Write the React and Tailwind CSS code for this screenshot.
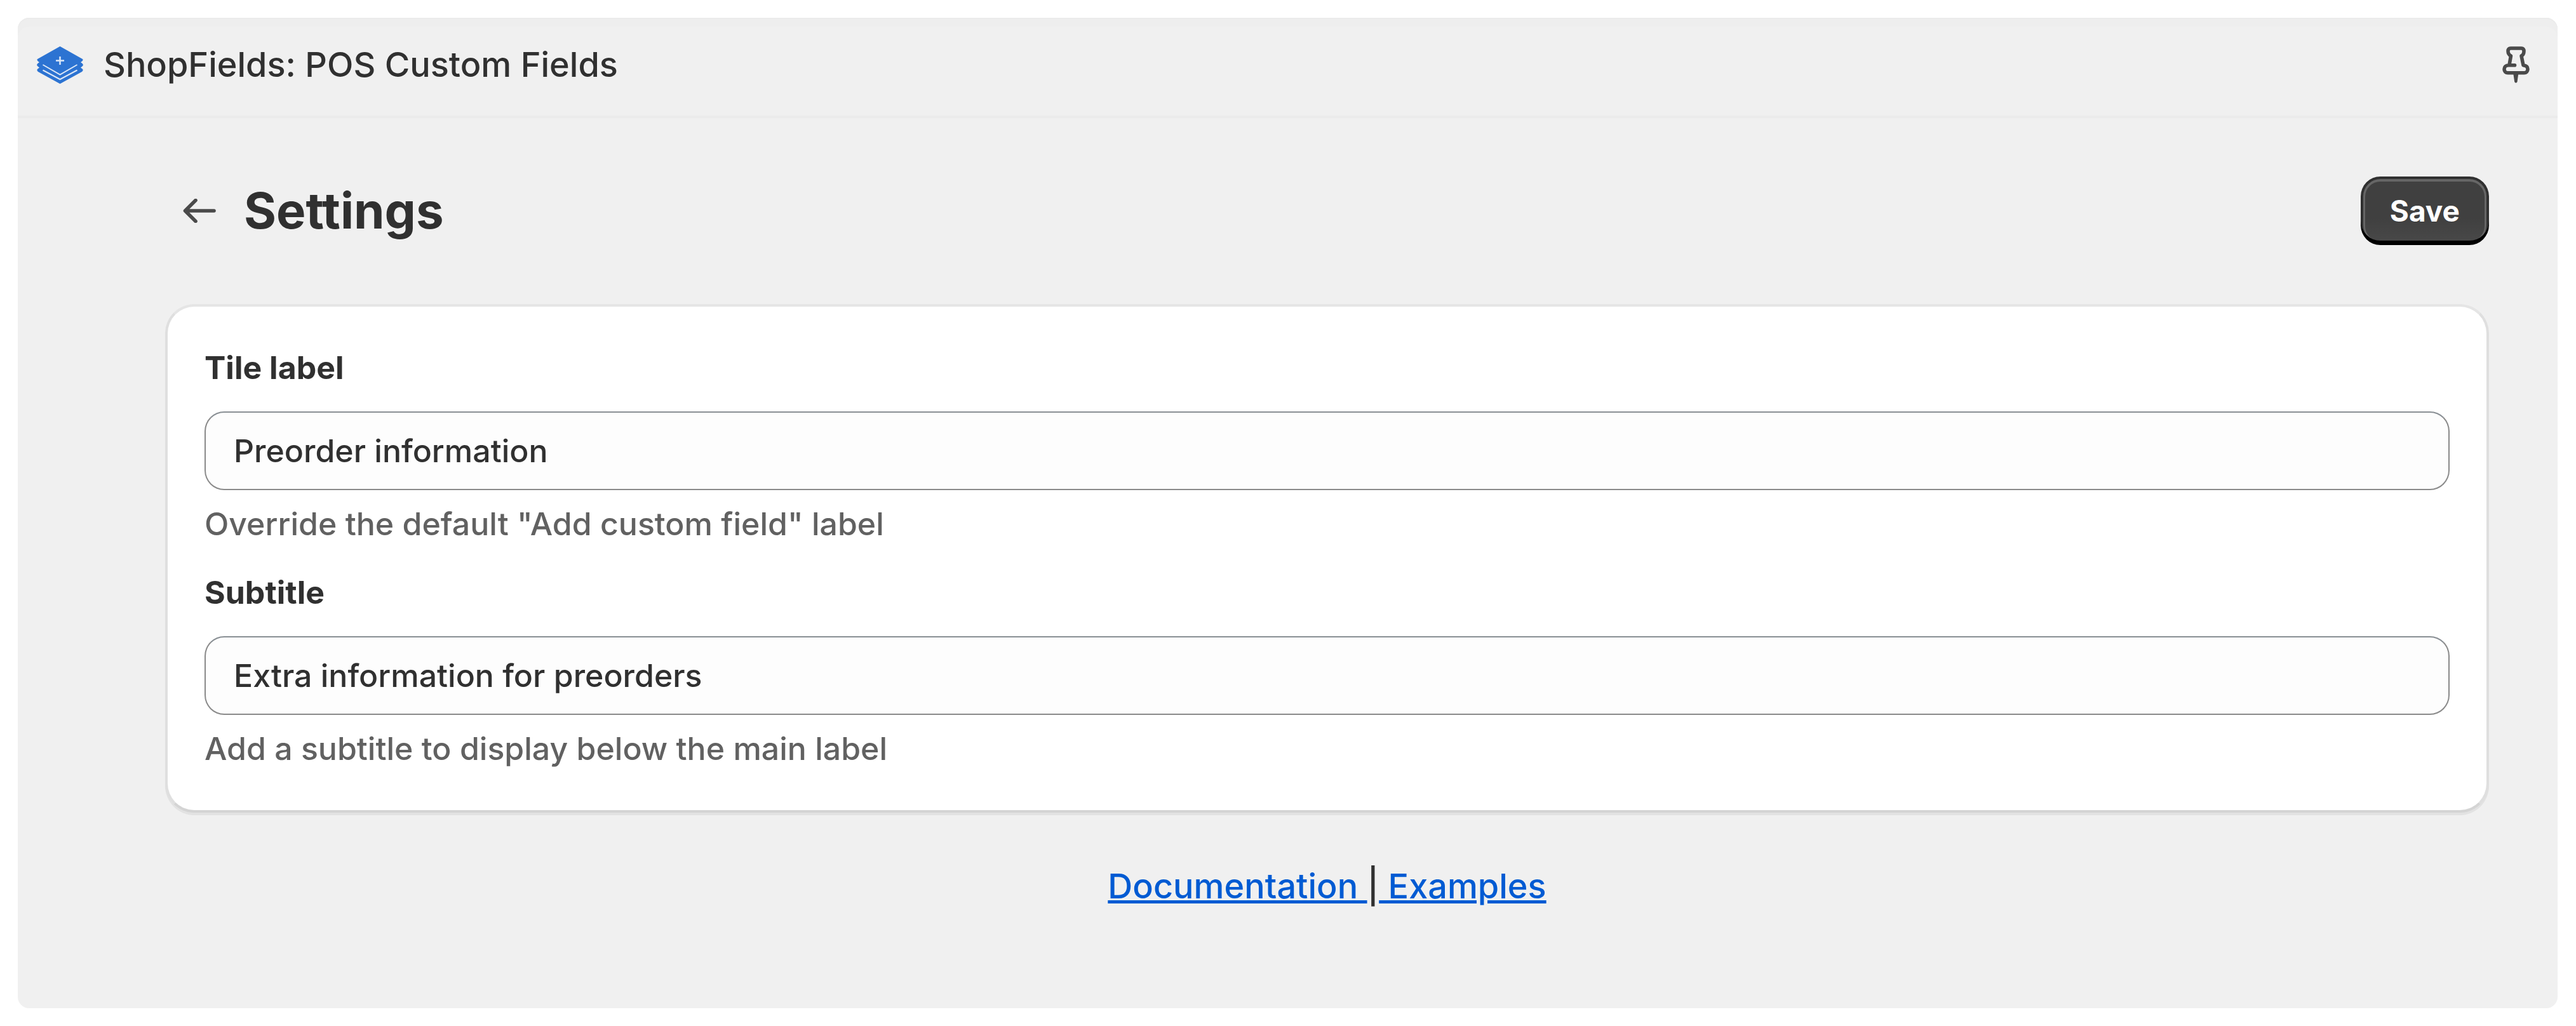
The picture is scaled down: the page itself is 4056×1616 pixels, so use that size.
import { useState } from "react";

const fields = [
  {
    id: "tileLabel",
    label: "Tile label",
    value: "Preorder information",
    help: 'Override the default "Add custom field" label',
  },
  {
    id: "subtitle",
    label: "Subtitle",
    value: "Extra information for preorders",
    help: "Add a subtitle to display below the main label",
  },
];

function AppLogo() {
  return (
    <svg className="h-[59px] w-[73px]" viewBox="0 0 73 59" fill="none" aria-hidden="true">
      <path
        d="M36.5 0L72 20Q74 22 69 25Q74 28 72.5 30.5Q71 32 69 33.5Q75 37 71 40L36.5 59L2 40Q-2 37 4 33.5Q2 32 .5 30.5Q-1 28 4 25Q-1 22 1 20Z"
        fill="#2c73d2"
      />
      <path d="M9.5 29L36.5 44.5L63.5 29M9.5 37.5L36.5 52L63.5 37.5" stroke="#dbe7f7" strokeWidth="2" />
      <path d="M36.5 16V29M30 22.5H43" stroke="#dbe7f7" strokeWidth="2.5" />
    </svg>
  );
}

function PinIcon() {
  return (
    <svg className="h-[58px] w-[43px]" viewBox="0 0 43 58" fill="none" aria-hidden="true">
      <path
        d="M19.5 29.8H10C5.5 29.8 3 32.5 3 36C3 39.5 5.5 41.7 8.5 41.7H34.5C37.5 41.7 40 39.5 40 36C40 32.5 37.5 30.3 33 29.8L30 15C33 13.5 34 11 34 7.5C34 4.7 32.5 3 30 3H13C10.5 3 9 4.7 9 7.5C9 11 10.5 13.5 13.5 15L11 29"
        stroke="#4a4a4a"
        strokeWidth="5.6"
        strokeLinecap="round"
        strokeLinejoin="round"
      />
      <path d="M17.3 43H25.3L23.5 56Q21.3 59 19.2 56Z" fill="#4a4a4a" />
    </svg>
  );
}

function BackIcon() {
  return (
    <svg className="h-[38px] w-[52px]" viewBox="0 0 52 38" fill="none" aria-hidden="true">
      <path
        d="M49 19H4M20 2.5L3.5 19L20 35.5"
        stroke="#4a4a4a"
        strokeWidth="5.6"
        strokeLinecap="round"
        strokeLinejoin="round"
      />
    </svg>
  );
}

export default function App() {
  const [values, setValues] = useState({
    tileLabel: fields[0].value,
    subtitle: fields[1].value,
  });

  return (
    <div className="flex min-h-screen flex-col bg-white p-7 pr-[29px] font-['Inter',sans-serif] font-[450] text-[#303030]">
      <div className="flex grow flex-col rounded-[18px] bg-[#f0f0f0] shadow-[inset_0_2px_0_#ebebeb,inset_0_14px_0_#eeeeee]">

        {/* App bar */}
        <header className="flex items-center justify-between border-b-4 border-[#ebebeb] px-[30px] pt-9 pb-[42px]">
          <div className="flex items-center gap-8">
            <AppLogo />
            <span className="text-[54px] leading-[76px]">ShopFields: POS Custom Fields</span>
          </div>
          <button type="button" aria-label="Pin app" className="mr-[14px]">
            <PinIcon />
          </button>
        </header>

        <main className="pt-[92px] pr-[108px] pl-[232px]">

          {/* Page header */}
          <div className="mb-[93px] flex items-center justify-between pl-7">
            <div className="flex items-center gap-11">
              <button type="button" aria-label="Back">
                <BackIcon />
              </button>
              <h1 className="text-[78px] leading-[108px] font-bold">Settings</h1>
            </div>
            <button
              type="submit"
              form="settings"
              className="h-[108px] rounded-[31px] bg-[#404040] bg-linear-to-b from-transparent from-60% to-white/5 px-[46px] text-[46px] font-[650] text-white shadow-[inset_0_-7px_0_#000,inset_0_0_0_4px_#303030,inset_0_1px_0_7px_#666]"
            >
              Save
            </button>
          </div>

          {/* Settings card */}
          <form
            id="settings"
            onSubmit={(e) => e.preventDefault()}
            className="flex flex-col gap-[31px] rounded-[46px] border-4 border-[#dfdfdf] border-t-[#e5e5e5] border-b-[#d4d4d4] bg-white p-[58px] shadow-[0_4px_0_#e2e2e2]"
          >
            {fields.map((field) => (
              <div key={field.id} className="flex flex-col text-[50px] leading-[77px]">
                <label htmlFor={field.id} className="font-[650]">
                  {field.label}
                </label>
                <input
                  id={field.id}
                  type="text"
                  value={values[field.id]}
                  onChange={(e) => setValues({ ...values, [field.id]: e.target.value })}
                  aria-describedby={`${field.id}-help`}
                  className="mt-[30px] h-[124px] rounded-[31px] border-2 border-[#8a8a8a] border-t-[#898f94] bg-[#fdfdfd] px-11"
                />
                <p id={`${field.id}-help`} className="mt-[15px] text-[#616161]">
                  {field.help}
                </p>
              </div>
            ))}
          </form>

          {/* Footer links */}
          <p className="mt-[77px] text-center text-[54px] leading-[77px] whitespace-pre">
            <a href="#documentation" className="text-[#005bd3] underline">{"Documentation "}</a>
            |
            <a href="#examples" className="text-[#005bd3] underline">{" Examples"}</a>
          </p>
        </main>
      </div>
    </div>
  );
}
